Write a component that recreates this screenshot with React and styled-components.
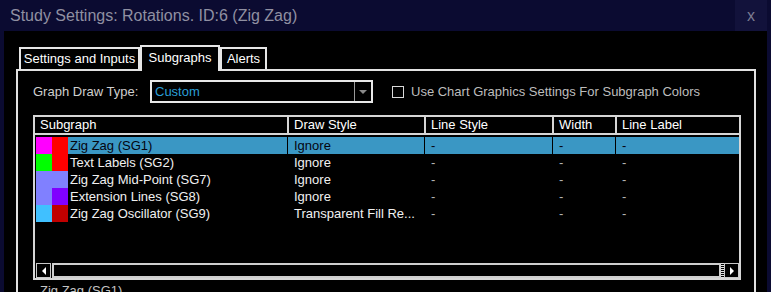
import React from "react";
import styled, { createGlobalStyle } from "styled-components";

const GlobalStyle = createGlobalStyle`
  html, body {
    margin: 0;
    padding: 0;
    background: #000;
  }
  body {
    width: 771px;
    height: 292px;
    overflow: hidden;
    font-family: "Liberation Sans", Arial, sans-serif;
  }
  * {
    box-sizing: border-box;
  }
`;

const Window = styled.div`
  display: flex;
  flex-direction: column;
  width: 771px;
  height: 292px;
  overflow: hidden;
  background: #000;
`;

const TitleBar = styled.div`
  display: flex;
  align-items: stretch;
  flex-shrink: 0;
  height: 31px;
  background: #0b0b31;
`;

const Title = styled.div`
  flex: 1;
  display: flex;
  align-items: center;
  padding-left: 10px;
  font-size: 16px;
  color: #9090a2;
`;

const CloseBox = styled.div`
  width: 32px;
  margin-right: 4px;
  display: flex;
  align-items: center;
  justify-content: center;
  background: #12123b;
  color: #7c7c92;
  font-size: 16px;
`;

const Body = styled.div`
  flex: 1;
  display: flex;
  flex-direction: column;
  min-height: 0;
  border-left: 4px solid #0b0b31;
  border-right: 4px solid #0b0b31;
  padding: 14px 11px 0 12px;
`;

const TabStrip = styled.div`
  display: flex;
  align-items: flex-end;
  flex-shrink: 0;
  height: 24px;
  padding-left: 3px;
`;

const Tab = styled.div`
  width: ${(p) => p.$w}px;
  height: ${(p) => (p.$active ? 26 : 22)}px;
  margin-bottom: ${(p) => (p.$active ? -2 : 0)}px;
  padding-top: ${(p) => (p.$active ? 3 : 2)}px;
  position: relative;
  z-index: ${(p) => (p.$active ? 1 : 0)};
  background: #000;
  border: 2px solid #e6e6e6;
  border-bottom: none;
  color: #fff;
  font-size: 13px;
  text-align: center;
`;

const Panel = styled.div`
  flex: 1;
  display: flex;
  flex-direction: column;
  min-height: 0;
  border: 2px solid #e2e2e2;
  border-bottom: none;
  padding: 9px 13px 0 15px;
`;

const ControlRow = styled.div`
  display: flex;
  align-items: center;
  flex-shrink: 0;
  height: 23px;
`;

const Label = styled.div`
  width: 117px;
  font-size: 13px;
  color: #cfcfcf;
`;

const Select = styled.div`
  display: flex;
  width: 223px;
  height: 23px;
  border: 2px solid #e8e8e8;
`;

const SelectValue = styled.div`
  flex: 1;
  display: flex;
  align-items: center;
  padding-left: 3px;
  font-size: 13px;
  color: #2a9ed6;
`;

const SelectButton = styled.div`
  width: 17px;
  display: flex;
  align-items: center;
  justify-content: center;
  border-left: 1px solid #9a9a9a;
`;

const CheckBox = styled.div`
  width: 12px;
  height: 12px;
  margin-left: 19px;
  border: 1.5px solid #d8d8d8;
`;

const CheckLabel = styled.div`
  margin-left: 7px;
  font-size: 13px;
  color: #bdbdbd;
`;

const Table = styled.div`
  display: flex;
  flex-direction: column;
  flex-shrink: 0;
  height: 165px;
  margin-top: 12px;
  border: 2px solid #d6d6d6;
`;

const HeaderRow = styled.div`
  display: grid;
  grid-template-columns: 252px 137px 128px 63px 1fr;
  height: 18px;
  border-bottom: 2px solid #d6d6d6;
`;

const HeaderCell = styled.div`
  padding-left: 5px;
  border-left: ${(p) => (p.$first ? "none" : "2px solid #d6d6d6")};
  font-size: 13px;
  line-height: 16px;
  color: #fff;
`;

const Rows = styled.div`
  flex: 1;
  padding-top: 2px;
`;

const Row = styled.div`
  display: grid;
  grid-template-columns: 33px 219px 137px 128px 63px 1fr;
  height: 17px;
  color: ${(p) => (p.$selected ? "#05050f" : "#f0f0f0")};
  font-size: 13px;
  line-height: 17px;
`;

const Swatches = styled.div`
  display: flex;
  padding-left: 1px;
`;

const Swatch = styled.div`
  width: 16px;
  background: ${(p) => p.$c};
`;

const NameCell = styled.div`
  padding-left: 2px;
  background: ${(p) => (p.$selected ? "#3a97c4" : "transparent")};
  white-space: nowrap;
`;

const Cell = styled.div`
  padding-left: 6px;
  border-left: 1px solid #000;
  background: ${(p) => (p.$selected ? "#3a97c4" : "transparent")};
  color: ${(p) => (p.$dash && !p.$selected ? "#b4b4b4" : "inherit")};
  white-space: nowrap;
  overflow: hidden;
`;

const ScrollBar = styled.div`
  display: flex;
  height: 15px;
  padding-left: 1px;
`;

const ScrollButton = styled.div`
  width: 15px;
  display: flex;
  align-items: center;
  justify-content: center;
  border: 1px solid #c8c8c8;
  background: #000;
`;

const Track = styled.div`
  flex: 1;
  margin-left: 1px;
  border: 2px solid #cecece;
`;

const Dither = styled.div`
  width: 3px;
  background: repeating-linear-gradient(#e0e0e0 0 1px, #000 1px 2px);
`;

const Footer = styled.div`
  flex-shrink: 0;
  padding: 3px 0 0 7px;
  font-size: 13px;
  color: #c4c4c4;
`;

const subgraphs = [
  { name: "Zig Zag (SG1)", c1: "#ff00ff", c2: "#ff0000", style: "Ignore", selected: true },
  { name: "Text Labels (SG2)", c1: "#00ff00", c2: "#ff0000", style: "Ignore" },
  { name: "Zig Zag Mid-Point (SG7)", c1: "#8080ff", c2: "#8080ff", style: "Ignore" },
  { name: "Extension Lines (SG8)", c1: "#8080ff", c2: "#8000ff", style: "Ignore" },
  { name: "Zig Zag Oscillator (SG9)", c1: "#40c0ff", c2: "#c00000", style: "Transparent Fill Re..." },
];

const Arrow = ({ dir, color }) => {
  const pts = {
    down: "0,0 8,0 4,4",
    left: "4,0 4,8 0,4",
    right: "0,0 0,8 4,4",
  }[dir];
  const size = dir === "down" ? [8, 4] : [4, 8];
  return (
    <svg width={size[0]} height={size[1]} viewBox={`0 0 ${size[0]} ${size[1]}`}>
      <polygon points={pts} fill={color} />
    </svg>
  );
};

const App = () => {
  return (
    <Window>
      <GlobalStyle />
      <TitleBar>
        <Title>Study Settings: Rotations. ID:6 (Zig Zag)</Title>
        <CloseBox>x</CloseBox>
      </TitleBar>
      <Body>
        <TabStrip>
          <Tab $w={121}>Settings and Inputs</Tab>
          <Tab $w={80} $active>Subgraphs</Tab>
          <Tab $w={47}>Alerts</Tab>
        </TabStrip>
        <Panel>
          <ControlRow>
            <Label>Graph Draw Type:</Label>
            <Select>
              <SelectValue>Custom</SelectValue>
              <SelectButton>
                <Arrow dir="down" color="#8a8a8a" />
              </SelectButton>
            </Select>
            <CheckBox />
            <CheckLabel>Use Chart Graphics Settings For Subgraph Colors</CheckLabel>
          </ControlRow>
          <Table>
            <HeaderRow>
              <HeaderCell $first>Subgraph</HeaderCell>
              <HeaderCell>Draw Style</HeaderCell>
              <HeaderCell>Line Style</HeaderCell>
              <HeaderCell>Width</HeaderCell>
              <HeaderCell>Line Label</HeaderCell>
            </HeaderRow>
            <Rows>
              {subgraphs.map(function (s) {
                return (
                  <Row key={s.name} $selected={s.selected}>
                    <Swatches>
                      <Swatch $c={s.c1} />
                      <Swatch $c={s.c2} />
                    </Swatches>
                    <NameCell $selected={s.selected}>{s.name}</NameCell>
                    <Cell $selected={s.selected}>{s.style}</Cell>
                    <Cell $selected={s.selected} $dash>-</Cell>
                    <Cell $selected={s.selected} $dash>-</Cell>
                    <Cell $selected={s.selected} $dash>-</Cell>
                  </Row>
                );
              })}
            </Rows>
            <ScrollBar>
              <ScrollButton>
                <Arrow dir="left" color="#fff" />
              </ScrollButton>
              <Track />
              <Dither />
              <ScrollButton>
                <Arrow dir="right" color="#fff" />
              </ScrollButton>
            </ScrollBar>
          </Table>
          <Footer>Zig Zag (SG1)</Footer>
        </Panel>
      </Body>
    </Window>
  );
};

export default App;
